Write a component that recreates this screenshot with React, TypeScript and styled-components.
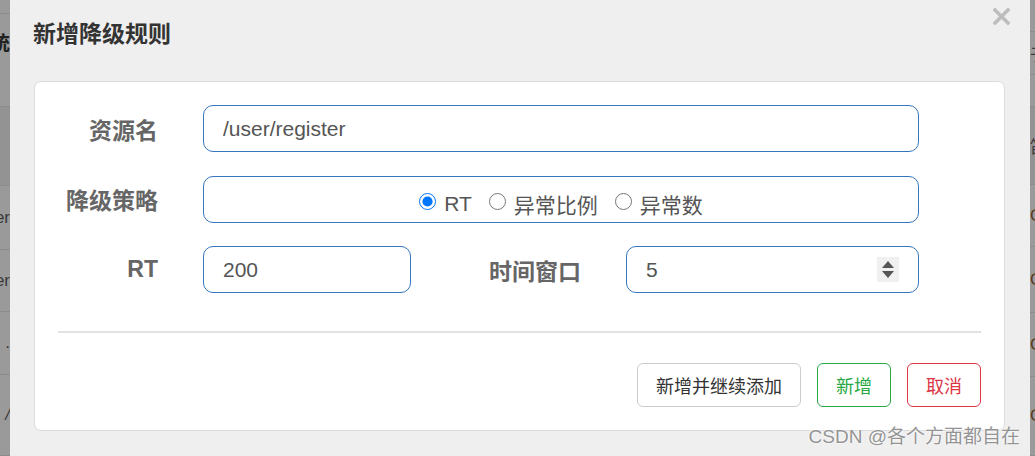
import React from 'react';
import styled, { createGlobalStyle } from 'styled-components';

const GlobalStyle = createGlobalStyle`
  html, body {
    margin: 0;
    padding: 0;
    background: #999;
  }
  body {
    font-family: "Liberation Sans", "Noto Sans CJK SC", sans-serif;
  }
`;

const Page = styled.div`
  display: flex;
  width: 1035px;
  height: 456px;
  overflow: hidden;
`;

const Backdrop = styled.div<{ $width: number; $align: 'start' | 'end' }>`
  width: ${(p) => p.$width}px;
  flex-shrink: 0;
  display: flex;
  flex-direction: column;
  background: #9a9a9a;
  overflow: hidden;

  & > div {
    justify-content: ${(p) => (p.$align === 'end' ? 'flex-end' : 'flex-start')};
  }
`;

const BackdropRow = styled.div<{ $h: number; $dark?: boolean; $color?: string; $head?: boolean; $italic?: boolean }>`
  height: ${(p) => p.$h}px;
  flex-shrink: 0;
  display: flex;
  align-items: ${(p) => (p.$head ? 'flex-start' : 'center')};
  padding-top: ${(p) => (p.$head ? '14px' : '0')};
  box-sizing: border-box;
  border-bottom: 1px solid #8c8c8c;
  background: ${(p) => (p.$dark ? '#939393' : 'transparent')};
  color: ${(p) => p.$color || '#3a3a3a'};
  font-size: ${(p) => (p.$head ? '20px' : '17px')};
  font-weight: ${(p) => (p.$head ? 700 : 400)};
  font-style: ${(p) => (p.$italic ? 'italic' : 'normal')};
  white-space: nowrap;
  overflow: hidden;
`;

const Dialog = styled.div`
  width: 1020px;
  flex-shrink: 0;
  background: #efefef;
  display: flex;
  flex-direction: column;
  position: relative;
`;

const Header = styled.div`
  height: 81px;
  display: flex;
  justify-content: space-between;
  align-items: flex-start;
  padding: 0 20px 0 23px;
  box-sizing: border-box;
`;

const Title = styled.h4`
  margin: 18px 0 0;
  font-size: 23px;
  line-height: 32px;
  font-weight: 700;
  color: #333;
`;

const CloseButton = styled.button`
  margin-top: 8px;
  width: 17px;
  height: 17px;
  padding: 0;
  border: none;
  background: none;
  display: flex;
`;

const Card = styled.div`
  margin: 0 25px 0 24px;
  height: 350px;
  box-sizing: border-box;
  background: #fff;
  border: 1px solid #dcdcdc;
  border-radius: 7px;
  padding-top: 23px;
  display: flex;
  flex-direction: column;
`;

const FormGrid = styled.div`
  display: grid;
  grid-template-columns: 123px 208px 125px 293px;
  grid-auto-rows: 47px;
  column-gap: 45px;
  row-gap: 23.5px;
`;

const Label = styled.label`
  display: flex;
  align-items: center;
  justify-content: flex-end;
  font-size: 23px;
  font-weight: 700;
  color: #666;
`;

const Field = styled.div<{ $span?: number }>`
  grid-column: span ${(p) => p.$span || 1};
  display: flex;
  align-items: center;
  box-sizing: border-box;
  border: 1px solid #3576bd;
  border-radius: 10px;
  padding: 0 19px 0 19px;
  background: #fff;
`;

const TextInput = styled.input`
  flex: 1;
  min-width: 0;
  border: none;
  outline: none;
  padding: 0;
  font-family: inherit;
  font-size: 21px;
  color: #555;
  background: transparent;
`;

const RadioGroup = styled.div`
  flex: 1;
  display: flex;
  justify-content: center;
  align-items: center;
  gap: 17px;
  padding-top: 9px;
`;

const RadioOption = styled.label`
  display: flex;
  align-items: center;
  gap: 8px;
  font-size: 21px;
  color: #555;
`;

const Radio = styled.input`
  width: 17px;
  height: 17px;
  margin: 0 0 5px;
  accent-color: #0075ff;
`;

const Spinner = styled.div`
  width: 22px;
  height: 25px;
  background: #f0f0f0;
  display: flex;
  flex-direction: column;
  align-items: center;
  justify-content: center;
  gap: 3px;
`;

const Divider = styled.hr`
  margin: 38px 23px 0;
  border: none;
  height: 2px;
  background: #e2e2e2;
`;

const Footer = styled.div`
  display: flex;
  justify-content: flex-end;
  gap: 16px;
  padding: 30px 23px 0;
`;

const Button = styled.button<{ $tone: 'default' | 'success' | 'danger' }>`
  height: 44px;
  padding: 0 18px;
  border-radius: 6px;
  background: #fff;
  font-family: inherit;
  font-size: 18px;
  border: 1px solid
    ${(p) => (p.$tone === 'success' ? '#28a745' : p.$tone === 'danger' ? '#dc3545' : '#cccccc')};
  color: ${(p) => (p.$tone === 'success' ? '#28a745' : p.$tone === 'danger' ? '#dc3545' : '#333')};
`;

const Watermark = styled.div`
  position: absolute;
  right: 10px;
  bottom: 8px;
  font-size: 19px;
  color: #949494;
  text-shadow: 0 0 2px #fff, 0 0 2px #fff;
  white-space: nowrap;
`;

const App: React.FC = () => {
  return (
    <>
      <GlobalStyle />
      <Page>
        <Backdrop $width={10} $align="end">
          <BackdropRow $h={14} />
          <BackdropRow $h={93} $head $color="#222">统</BackdropRow>
          <BackdropRow $h={79} $dark />
          <BackdropRow $h={64}>er</BackdropRow>
          <BackdropRow $h={62}>er</BackdropRow>
          <BackdropRow $h={63}>.</BackdropRow>
          <BackdropRow $h={81} $italic>/</BackdropRow>
        </Backdrop>

        <Dialog>
          <Header>
            <Title>新增降级规则</Title>
            <CloseButton aria-label="close">
              <svg width="17" height="17" viewBox="0 0 17 17">
                <path d="M2 2L15 15M15 2L2 15" stroke="#bdbdbd" strokeWidth="3.6" strokeLinecap="square" />
              </svg>
            </CloseButton>
          </Header>

          <Card>
            <FormGrid>
              <Label>资源名</Label>
              <Field $span={3}>
                <TextInput defaultValue="/user/register" />
              </Field>

              <Label>降级策略</Label>
              <Field $span={3}>
                <RadioGroup>
                  <RadioOption>
                    <Radio type="radio" name="grade" defaultChecked />
                    RT
                  </RadioOption>
                  <RadioOption>
                    <Radio type="radio" name="grade" />
                    异常比例
                  </RadioOption>
                  <RadioOption>
                    <Radio type="radio" name="grade" />
                    异常数
                  </RadioOption>
                </RadioGroup>
              </Field>

              <Label>RT</Label>
              <Field>
                <TextInput defaultValue="200" />
              </Field>
              <Label>时间窗口</Label>
              <Field>
                <TextInput defaultValue="5" />
                <Spinner>
                  <svg width="12" height="7" viewBox="0 0 12 7">
                    <path d="M6 0L12 7H0Z" fill="#555" />
                  </svg>
                  <svg width="12" height="7" viewBox="0 0 12 7">
                    <path d="M0 0H12L6 7Z" fill="#555" />
                  </svg>
                </Spinner>
              </Field>
            </FormGrid>

            <Divider />

            <Footer>
              <Button $tone="default">新增并继续添加</Button>
              <Button $tone="success">新增</Button>
              <Button $tone="danger">取消</Button>
            </Footer>
          </Card>

          <Watermark>CSDN @各个方面都自在</Watermark>
        </Dialog>

        <Backdrop $width={5} $align="start">
          <BackdropRow $h={32} />
          <BackdropRow $h={43}>于</BackdropRow>
          <BackdropRow $h={32} />
          <BackdropRow $h={78} $dark>笛</BackdropRow>
          <BackdropRow $h={62} $color="#5b3b1c">C</BackdropRow>
          <BackdropRow $h={66} $color="#5b3b1c">C</BackdropRow>
          <BackdropRow $h={64} $color="#5b3b1c">C</BackdropRow>
          <BackdropRow $h={79} $color="#5b3b1c">C</BackdropRow>
        </Backdrop>
      </Page>
    </>
  );
};

export default App;
